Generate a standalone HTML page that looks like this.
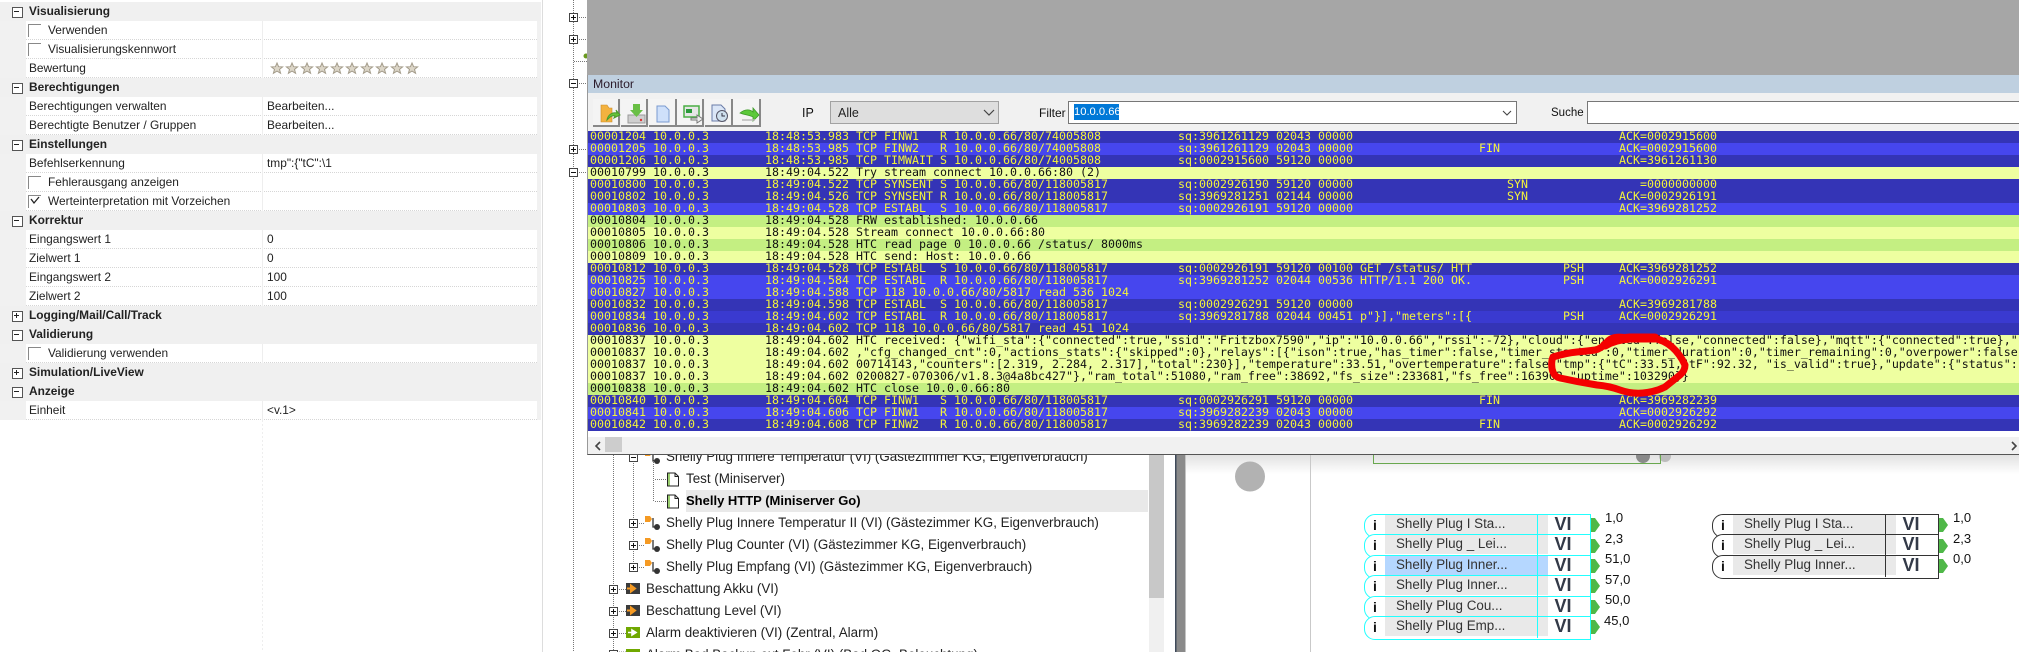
<!DOCTYPE html>
<html lang="de"><head><meta charset="utf-8"><title>Monitor</title>
<style>
html,body{margin:0;padding:0;width:2019px;height:652px;overflow:hidden;background:#fff;font-family:"Liberation Sans",sans-serif;color:#111}
#page{position:relative;width:2019px;height:652px;overflow:hidden;background:#fff}
.abs,.abs *{box-sizing:border-box}
.abs{position:absolute}
#left{position:absolute;left:0;top:2px;width:541px;font-size:11.9px;line-height:19px}
.s,.r{height:19px;position:relative;white-space:nowrap}
.s{background:#f0f0f0;font-weight:bold;color:#222;padding-left:29px}
.r{background:#fff;margin-left:0;padding-left:29px;color:#222}
.r:before{content:"";position:absolute;left:0;top:0;width:26px;height:19px;background:#f1f1f1}
.r:after{content:"";position:absolute;left:537px;top:0;width:4px;height:19px;background:#f1f1f1}
.r u{position:absolute;left:26px;right:4px;bottom:0;border-bottom:1px dotted #d6d6d6;text-decoration:none}
.r em{position:absolute;left:262px;top:0;height:19px;border-left:1px solid #eee;padding-left:4px;font-style:normal}
.c{padding-left:48px}
.c i{position:absolute;left:28px;top:3px;width:12px;height:12px;border-left:1px solid #888;border-top:1px solid #888}
.b{position:absolute;left:12px;top:5px;width:9px;height:9px;border:1px solid #555;background:#fff}
.b:before{content:"";position:absolute;left:1px;top:3px;width:5px;height:1px;background:#222}
.p:after{content:"";position:absolute;left:3px;top:1px;width:1px;height:5px;background:#222}
.t{position:absolute;font-size:13.4px;line-height:20px;height:20px;white-space:nowrap;color:#222}
#mon{position:absolute;left:587px;top:75px;width:1432px;height:379px;background:#f1f1f1;border-bottom:1px solid #555;border-left:1px solid #999;overflow:hidden}
#rows{position:absolute;left:0;top:56px;width:1432px;height:300px;font-family:"DejaVu Sans Mono","Liberation Mono",monospace;font-size:11.63px;line-height:12px}
#rows div{height:12px;position:relative;white-space:pre;overflow:hidden}
#rows span{position:absolute;top:-1px}
.d{background:#3434b6;color:#f4f43a}.l{background:#4646ee;color:#f4f43a}.m{background:#3a3ad0;color:#f4f43a}
.y{background:#eeffa0;color:#111}.g{background:#c4ef82;color:#111}
.a{left:2px}.h{left:177px}.q{left:590px}.fi{left:891px}.sy{left:919px}.ps{left:975px}.k{left:1031px}
.lb{position:absolute;font-size:12.5px;line-height:16px;white-space:nowrap;color:#111}
.bk{position:absolute;height:22px;border:1.5px solid #2ff;background:#fff;border-radius:11px 0 0 11px;width:225px}
.bk.n{border:1.5px solid #333}
.bk b{position:absolute;left:8px;top:2px;font-size:14px;line-height:16px;color:#111}
.bk p{margin:0;position:absolute;left:20px;top:0;width:152px;height:19px;background:#e9e9e9;font-size:13.4px;line-height:18px;padding-left:11px;color:#333;white-space:nowrap}
.bk.sel p{background:#b5d7ff}
.bk s{position:absolute;left:172px;top:-1.5px;height:22px;width:50px;border-left:1.5px solid #2ff;text-decoration:none;text-align:center;font-weight:bold;font-size:18px;line-height:21px;color:#333a48}
.bk.n s{border-left:1.5px solid #333}
.v{position:absolute;font-size:13px;line-height:14px;color:#111}
</style></head><body>
<div id="page">

<div id="left">
<div class="s"><span class="b"></span>Visualisierung</div>
<div class="r c"><i></i>Verwenden<u></u><em></em></div>
<div class="r c"><i></i>Visualisierungskennwort<u></u><em></em></div>
<div class="r">Bewertung<u></u><em></em></div>
<div class="s"><span class="b"></span>Berechtigungen</div>
<div class="r">Berechtigungen verwalten<u></u><em>Bearbeiten...</em></div>
<div class="r">Berechtigte Benutzer / Gruppen<u></u><em>Bearbeiten...</em></div>
<div class="s"><span class="b"></span>Einstellungen</div>
<div class="r">Befehlserkennung<u></u><em>tmp":{"tC":\1</em></div>
<div class="r c"><i></i>Fehlerausgang anzeigen<u></u><em></em></div>
<div class="r c"><i></i>Werteinterpretation mit Vorzeichen<u></u><em></em></div>
<div class="s"><span class="b"></span>Korrektur</div>
<div class="r">Eingangswert 1<u></u><em>0</em></div>
<div class="r">Zielwert 1<u></u><em>0</em></div>
<div class="r">Eingangswert 2<u></u><em>100</em></div>
<div class="r">Zielwert 2<u></u><em>100</em></div>
<div class="s"><span class="b p"></span>Logging/Mail/Call/Track</div>
<div class="s"><span class="b"></span>Validierung</div>
<div class="r c"><i></i>Validierung verwenden<u></u><em></em></div>
<div class="s"><span class="b p"></span>Simulation/LiveView</div>
<div class="s"><span class="b"></span>Anzeige</div>
<div class="r">Einheit<u></u><em>&lt;v.1&gt;</em></div>
</div>

<svg class="abs" style="left:0;top:0" width="2019" height="652" viewBox="0 0 2019 652">
<defs>
<linearGradient id="sh" x1="0" y1="0" x2="0" y2="1"><stop offset="0" stop-color="#e0e0e0"/><stop offset="1" stop-color="#fff"/></linearGradient>
<polygon id="st" points="0,-5.5 1.6,-1.8 5.6,-1.6 2.5,0.9 3.6,4.8 0,2.6 -3.6,4.8 -2.5,0.9 -5.6,-1.6 -1.6,-1.8" fill="#dcd6c8" stroke="#a39b8a" stroke-width="1"/>
<g id="pi"><polygon points="0,-7 5,-7 7,-4 5,-1 0,-1" fill="#f59a23"/><path d="M8-5V4H11" fill="none" stroke="#333" stroke-width="1.3"/><circle cx="12" cy="4" r="3" fill="#333"/></g>
<g id="doc"><path d="M.5-6.5H8L11.5-3V6.5H.5Z" fill="#fff" stroke="#222"/><path d="M8-6.5V-3H11.5" fill="none" stroke="#222"/><rect x="1" y="-6" width="2" height="12" fill="#9ccf70"/></g>
</defs>
<!-- left panel extras -->
<path d="M262.5 420V652" stroke="#eee" stroke-dasharray="2 2"/>
<path d="M542.5 0V652" stroke="#ddd"/>
<path d="M31 199L34 203 39 197" fill="none" stroke="#222" stroke-width="1.3"/>
<use href="#st" x="277" y="68.5"/><use href="#st" x="292" y="68.5"/><use href="#st" x="307" y="68.5"/><use href="#st" x="322" y="68.5"/><use href="#st" x="337" y="68.5"/><use href="#st" x="352" y="68.5"/><use href="#st" x="367" y="68.5"/><use href="#st" x="382" y="68.5"/><use href="#st" x="397" y="68.5"/><use href="#st" x="412" y="68.5"/>

<!-- tree upper -->
<path d="M573.5 0V652M577 17.5H587M577 39.5H587M574 61.5H587M577 83.5H587M577 149.5H587M577 172.5H587" stroke="#777" stroke-dasharray="1 1" fill="none"/>
<circle cx="586" cy="56" r="2.5" fill="#6a9a1f"/>
<g fill="#fff" stroke="#444"><rect x="569.5" y="13.5" width="8" height="8"/><rect x="569.5" y="35.5" width="8" height="8"/><rect x="569.5" y="79.5" width="8" height="8"/><rect x="569.5" y="145.5" width="8" height="8"/><rect x="569.5" y="168.5" width="8" height="8"/></g>
<path d="M571 17.5H576M573.5 15V20M571 39.5H576M573.5 37V42M571 83.5H576M571 149.5H576M573.5 147V152M571 172.5H576" stroke="#111"/>

<!-- tree lower lines -->
<path d="M613.5 453V652M633.5 453V570M653.5 460V501M655 479.5H667M655 501.5H667M637 523.5H645M637 545.5H645M637 567.5H645M617 589.5H626M617 611.5H626M617 633.5H626M617 652H626" stroke="#777" stroke-dasharray="1 1" fill="none"/>
<g fill="#fff" stroke="#444"><rect x="629.5" y="453.5" width="8" height="8"/><rect x="629.5" y="519.5" width="8" height="8"/><rect x="629.5" y="541.5" width="8" height="8"/><rect x="629.5" y="563.5" width="8" height="8"/><rect x="609.5" y="585.5" width="8" height="8"/><rect x="609.5" y="607.5" width="8" height="8"/><rect x="609.5" y="629.5" width="8" height="8"/><rect x="609.5" y="650.5" width="8" height="8"/></g>
<path d="M631 457.5H636M631 523.5H636M633.5 521V526M631 545.5H636M633.5 543V548M631 567.5H636M633.5 565V570M611 589.5H616M613.5 587V592M611 611.5H616M613.5 609V614M611 633.5H616M613.5 631V636" stroke="#111"/>
<use href="#pi" x="645" y="457"/><use href="#pi" x="645" y="523"/><use href="#pi" x="645" y="545"/><use href="#pi" x="645" y="567"/>
<use href="#doc" x="667" y="479.5"/><use href="#doc" x="667" y="501.5"/>
<rect x="686" y="490" width="462" height="22" fill="#e9e9e9"/>
<rect x="626" y="583" width="14" height="11" fill="#3b3b3b"/><path d="M627 588.5H633M631 585.5L635 588.5 631 591.5Z" stroke="#f59a23" stroke-width="2" fill="#f59a23"/>
<rect x="626" y="605" width="14" height="11" fill="#3b3b3b"/><path d="M627 610.5H633M631 607.5L635 610.5 631 613.5Z" stroke="#f59a23" stroke-width="2" fill="#f59a23"/>
<rect x="626" y="627" width="14" height="11" fill="#70a800"/><path d="M628 632.5H634M632 630L636 632.5 632 635Z" stroke="#fff" stroke-width="1.6" fill="#fff"/>
<rect x="626" y="649" width="14" height="3" fill="#70a800"/>

<!-- tree scrollbar + divider -->
<rect x="1149" y="453" width="15" height="199" fill="#f0f0f0"/>
<rect x="1149" y="453" width="15" height="145" fill="#c8c8c8"/>
<rect x="1175" y="453" width="1.5" height="199" fill="#3f4a5a"/>
<rect x="1176.5" y="453" width="9" height="199" fill="#8a8a8a"/>
<rect x="1186" y="454" width="833" height="20" fill="url(#sh)"/>
<circle cx="1250" cy="476.5" r="15" fill="#b2b2b2"/>
<path d="M1310.5 453V652" stroke="#c9c9c9"/>
<circle cx="1643" cy="456" r="7" fill="#8a8a8a"/><circle cx="1665" cy="456" r="6" fill="#bcbcbc"/>
<path d="M1373.5 450V463.5H1660.5V450" fill="none" stroke="#69a84f"/>

<!-- outputs -->
<g fill="#4fb848">
<polygon points="1589,518 1595,518 1600,525 1595,532 1589,532"/>
<polygon points="1589,539 1595,539 1600,546 1595,553 1589,553"/>
<polygon points="1589,559 1595,559 1600,566 1595,573 1589,573"/>
<polygon points="1589,579 1595,579 1600,586 1595,593 1589,593"/>
<polygon points="1589,600 1595,600 1600,607 1595,614 1589,614"/>
<polygon points="1589,620 1595,620 1600,627 1595,634 1589,634"/>
<polygon points="1937,518 1943,518 1948,525 1943,532 1937,532"/>
<polygon points="1937,539 1943,539 1948,546 1943,553 1937,553"/>
<polygon points="1937,559 1943,559 1948,566 1943,573 1937,573"/>
</g>
</svg>

<div class="t" style="left:666px;top:447px">Shelly Plug Innere Temperatur (VI) (Gästezimmer KG, Eigenverbrauch)</div>
<div class="t" style="left:686px;top:469px">Test (Miniserver)</div>
<div class="t" style="left:686px;top:491px;font-weight:bold;color:#000;font-size:13px">Shelly HTTP (Miniserver Go)</div>
<div class="t" style="left:666px;top:513px">Shelly Plug Innere Temperatur II (VI) (Gästezimmer KG, Eigenverbrauch)</div>
<div class="t" style="left:666px;top:535px">Shelly Plug Counter (VI) (Gästezimmer KG, Eigenverbrauch)</div>
<div class="t" style="left:666px;top:557px">Shelly Plug Empfang (VI) (Gästezimmer KG, Eigenverbrauch)</div>
<div class="t" style="left:646px;top:579px">Beschattung Akku (VI)</div>
<div class="t" style="left:646px;top:601px">Beschattung Level (VI)</div>
<div class="t" style="left:646px;top:623px">Alarm deaktivieren (VI) (Zentral, Alarm)</div>
<div class="t" style="left:646px;top:645px">Alarm Bad Backup ext Fehr (VI) (Bad OG, Beleuchtung)</div>

<div class="bk" style="left:1364px;top:514px"><b>i</b><p>Shelly Plug I Sta...</p><s>VI</s></div>
<div class="bk" style="left:1364px;top:534px"><b>i</b><p>Shelly Plug _ Lei...</p><s>VI</s></div>
<div class="bk sel" style="left:1364px;top:555px"><b>i</b><p>Shelly Plug Inner...</p><s>VI</s></div>
<div class="bk" style="left:1364px;top:575px"><b>i</b><p>Shelly Plug Inner...</p><s>VI</s></div>
<div class="bk" style="left:1364px;top:596px"><b>i</b><p>Shelly Plug Cou...</p><s>VI</s></div>
<div class="bk" style="left:1364px;top:616px"><b>i</b><p>Shelly Plug Emp...</p><s>VI</s></div>
<div class="bk n" style="left:1712px;top:514px"><b>i</b><p>Shelly Plug I Sta...</p><s>VI</s></div>
<div class="bk n" style="left:1712px;top:534px"><b>i</b><p>Shelly Plug _ Lei...</p><s>VI</s></div>
<div class="bk n" style="left:1712px;top:555px"><b>i</b><p>Shelly Plug Inner...</p><s>VI</s></div>
<div class="v" style="left:1605px;top:511px">1,0</div>
<div class="v" style="left:1605px;top:532px">2,3</div>
<div class="v" style="left:1605px;top:552px">51,0</div>
<div class="v" style="left:1605px;top:573px">57,0</div>
<div class="v" style="left:1605px;top:593px">50,0</div>
<div class="v" style="left:1604px;top:614px">45,0</div>
<div class="v" style="left:1953px;top:511px">1,0</div>
<div class="v" style="left:1953px;top:532px">2,3</div>
<div class="v" style="left:1953px;top:552px">0,0</div>

<!-- gray top -->
<div class="abs" style="left:587px;top:0;width:1432px;height:75px;background:#a6a6a6"></div>

<!-- monitor -->
<div id="mon">
<div class="abs" style="left:0;top:0;width:1432px;height:18px;background:#bfd0e0"></div>
<div class="lb" style="left:5px;top:1px;font-size:12.3px;color:#2b1a2a">Monitor</div>

<div class="abs" style="left:5px;top:24px;width:27px;height:28px;background:#f4f4f4;border-right:2px solid #888;border-bottom:2px solid #888"></div>
<div class="abs" style="left:33px;top:24px;width:27px;height:28px;background:#f4f4f4;border-right:2px solid #888;border-bottom:2px solid #888"></div>
<div class="abs" style="left:61px;top:24px;width:28px;height:28px;background:#f4f4f4;border-right:2px solid #888;border-bottom:2px solid #888"></div>
<div class="abs" style="left:89px;top:24px;width:27px;height:28px;background:#f4f4f4;border-right:2px solid #888;border-bottom:2px solid #888"></div>
<div class="abs" style="left:117px;top:24px;width:28px;height:28px;background:#f4f4f4;border-right:2px solid #888;border-bottom:2px solid #888"></div>
<div class="abs" style="left:145px;top:24px;width:28px;height:28px;background:#f4f4f4;border-right:2px solid #888;border-bottom:2px solid #888"></div>
<svg class="abs" style="left:0;top:0" width="200" height="56" viewBox="587 75 200 56">
<path d="M600 105H606L608 108H611V122H600Z" fill="#f3b23f" stroke="#c98a2a" stroke-width=".6"/>
<path d="M606 120C607 114 612 112 616 113L615 110 619 115 613 118 614 116C611 115 609 117 606 120Z" fill="#66c23a" stroke="#4a9a2a" stroke-width="1"/>
<path d="M627 115H644V123H627Z" fill="#cfcfcf" stroke="#9a9a9a"/><circle cx="640" cy="120" r="1.2" fill="#d33"/>
<path d="M632 104H639V110H642L635.5 117 629 110H632Z" fill="#69bf45"/>
<path d="M656 106H664L668 110V122H656Z" fill="#cfe0fa" stroke="#7a9ad0"/>
<rect x="683" y="106" width="15" height="11" fill="#e6e6e6" stroke="#4aae45" stroke-width="1.5"/><rect x="685" y="109" width="6" height="4" fill="#2a9a3a"/>
<path d="M690 118H696V115L702 119 696 123V120H690Z" fill="#eee" stroke="#777"/>
<path d="M711 105H720L724 109V121H711Z" fill="#dbe6f7" stroke="#6a7ca8"/><circle cx="721" cy="116" r="5.5" fill="#cfe0ee" stroke="#556"/><path d="M721 113V116H724" stroke="#334" fill="none"/>
<path d="M739 113C744 109 749 109 752 112V108L758 115 752 121V117C748 115 744 115 739 113Z" fill="#5cc93a" stroke="#3d9a28" stroke-width=".8"/>
<path d="M741 120H754" stroke="#bbb" stroke-width="1.5"/>
</svg>

<div class="lb" style="left:214px;top:30px">IP</div>
<div class="abs" style="left:242px;top:26px;width:169px;height:23px;background:#dedede;border:1px solid #a2a2a2"></div>
<div class="lb" style="left:250px;top:30px;color:#222">Alle</div>
<svg class="abs" style="left:395px;top:33px" width="12" height="9"><path d="M1 2L6 7 11 2" fill="none" stroke="#444" stroke-width="1.2"/></svg>
<div class="lb" style="left:451px;top:30px;font-size:12px">Filter</div>
<div class="abs" style="left:480px;top:26px;width:449px;height:23px;background:#fff;border:1px solid #777"></div>
<div class="abs" style="left:486px;top:29px;width:45px;height:16px;background:#0078d7;color:#fff;font-size:11.2px;line-height:16px;text-align:center">10.0.0.66</div>
<svg class="abs" style="left:913px;top:34px" width="12" height="9"><path d="M2 2L6 6 10 2" fill="none" stroke="#444" stroke-width="1.1"/></svg>
<div class="lb" style="left:963px;top:30px;font-size:11.5px">Suche</div>
<div class="abs" style="left:999px;top:26px;width:440px;height:23px;background:#fff;border:1px solid #777"></div>

<div id="rows">
<div class="d"><span class="a">00001204 10.0.0.3</span><span class="h">18:48:53.983 TCP FINW1   R 10.0.0.66/80/74005808</span><span class="q">sq:3961261129 02043 00000</span><span class="k">ACK=0002915600</span></div>
<div class="l"><span class="a">00001205 10.0.0.3</span><span class="h">18:48:53.985 TCP FINW2   R 10.0.0.66/80/74005808</span><span class="q">sq:3961261129 02043 00000</span><span class="fi">FIN</span><span class="k">ACK=0002915600</span></div>
<div class="d"><span class="a">00001206 10.0.0.3</span><span class="h">18:48:53.985 TCP TIMWAIT S 10.0.0.66/80/74005808</span><span class="q">sq:0002915600 59120 00000</span><span class="k">ACK=3961261130</span></div>
<div class="y"><span class="a">00010799 10.0.0.3</span><span class="h">18:49:04.522 Try stream connect 10.0.0.66:80 (2)</span></div>
<div class="d"><span class="a">00010800 10.0.0.3</span><span class="h">18:49:04.522 TCP SYNSENT S 10.0.0.66/80/118005817</span><span class="q">sq:0002926190 59120 00000</span><span class="sy">SYN</span><span class="k">   =0000000000</span></div>
<div class="d"><span class="a">00010802 10.0.0.3</span><span class="h">18:49:04.526 TCP SYNSENT R 10.0.0.66/80/118005817</span><span class="q">sq:3969281251 02144 00000</span><span class="sy">SYN</span><span class="k">ACK=0002926191</span></div>
<div class="l"><span class="a">00010803 10.0.0.3</span><span class="h">18:49:04.528 TCP ESTABL  S 10.0.0.66/80/118005817</span><span class="q">sq:0002926191 59120 00000</span><span class="k">ACK=3969281252</span></div>
<div class="g"><span class="a">00010804 10.0.0.3</span><span class="h">18:49:04.528 FRW established: 10.0.0.66</span></div>
<div class="y"><span class="a">00010805 10.0.0.3</span><span class="h">18:49:04.528 Stream connect 10.0.0.66:80</span></div>
<div class="g"><span class="a">00010806 10.0.0.3</span><span class="h">18:49:04.528 HTC read page 0 10.0.0.66 /status/ 8000ms</span></div>
<div class="y"><span class="a">00010809 10.0.0.3</span><span class="h">18:49:04.528 HTC send: Host: 10.0.0.66</span></div>
<div class="d"><span class="a">00010812 10.0.0.3</span><span class="h">18:49:04.528 TCP ESTABL  S 10.0.0.66/80/118005817</span><span class="q">sq:0002926191 59120 00100 GET /status/ HTT</span><span class="ps">PSH</span><span class="k">ACK=3969281252</span></div>
<div class="l"><span class="a">00010825 10.0.0.3</span><span class="h">18:49:04.584 TCP ESTABL  R 10.0.0.66/80/118005817</span><span class="q">sq:3969281252 02044 00536 HTTP/1.1 200 OK.</span><span class="ps">PSH</span><span class="k">ACK=0002926291</span></div>
<div class="l"><span class="a">00010827 10.0.0.3</span><span class="h">18:49:04.588 TCP 118 10.0.0.66/80/5817 read 536 1024</span></div>
<div class="d"><span class="a">00010832 10.0.0.3</span><span class="h">18:49:04.598 TCP ESTABL  S 10.0.0.66/80/118005817</span><span class="q">sq:0002926291 59120 00000</span><span class="k">ACK=3969281788</span></div>
<div class="m"><span class="a">00010834 10.0.0.3</span><span class="h">18:49:04.602 TCP ESTABL  R 10.0.0.66/80/118005817</span><span class="q">sq:3969281788 02044 00451 p"}],"meters":[{</span><span class="ps">PSH</span><span class="k">ACK=0002926291</span></div>
<div class="d"><span class="a">00010836 10.0.0.3</span><span class="h">18:49:04.602 TCP 118 10.0.0.66/80/5817 read 451 1024</span></div>
<div class="y"><span class="a">00010837 10.0.0.3</span><span class="h">18:49:04.602 HTC received: {"wifi_sta":{"connected":true,"ssid":"Fritzbox7590","ip":"10.0.0.66","rssi":-72},"cloud":{"enabled":false,"connected":false},"mqtt":{"connected":true},"</span></div>
<div class="y"><span class="a">00010837 10.0.0.3</span><span class="h">18:49:04.602 ,"cfg_changed_cnt":0,"actions_stats":{"skipped":0},"relays":[{"ison":true,"has_timer":false,"timer_started":0,"timer_duration":0,"timer_remaining":0,"overpower":false</span></div>
<div class="y"><span class="a">00010837 10.0.0.3</span><span class="h">18:49:04.602 00714143,"counters":[2.319, 2.284, 2.317],"total":230}],"temperature":33.51,"overtemperature":false,"tmp":{"tC":33.51,"tF":92.32, "is_valid":true},"update":{"status":"</span></div>
<div class="y"><span class="a">00010837 10.0.0.3</span><span class="h">18:49:04.602 0200827-070306/v1.8.3@4a8bc427"},"ram_total":51080,"ram_free":38692,"fs_size":233681,"fs_free":163902,"uptime":103290}}</span></div>
<div class="g"><span class="a">00010838 10.0.0.3</span><span class="h">18:49:04.602 HTC close 10.0.0.66:80</span></div>
<div class="d"><span class="a">00010840 10.0.0.3</span><span class="h">18:49:04.604 TCP FINW1   S 10.0.0.66/80/118005817</span><span class="q">sq:0002926291 59120 00000</span><span class="fi">FIN</span><span class="k">ACK=3969282239</span></div>
<div class="l"><span class="a">00010841 10.0.0.3</span><span class="h">18:49:04.606 TCP FINW1   R 10.0.0.66/80/118005817</span><span class="q">sq:3969282239 02043 00000</span><span class="k">ACK=0002926292</span></div>
<div class="d"><span class="a">00010842 10.0.0.3</span><span class="h">18:49:04.608 TCP FINW2   R 10.0.0.66/80/118005817</span><span class="q">sq:3969282239 02043 00000</span><span class="fi">FIN</span><span class="k">ACK=0002926292</span></div>
</div>

<div class="abs" style="left:0;top:356px;width:1432px;height:6px;background:#fff"></div>
<svg class="abs" style="left:4px;top:364px" width="12" height="14"><path d="M8 3L4 7 8 11" fill="none" stroke="#444" stroke-width="1.6"/></svg>
<div class="abs" style="left:17px;top:362px;width:17px;height:15px;background:#cdcdcd"></div>
<svg class="abs" style="left:1420px;top:364px" width="12" height="14"><path d="M4 3L8 7 4 11" fill="none" stroke="#444" stroke-width="1.6"/></svg>
</div>

<svg class="abs" style="left:0;top:0;pointer-events:none" width="2019" height="652" viewBox="0 0 2019 652">
<path d="M1553 357Q1566 353 1577 352T1595 350Q1601 349 1607 342T1627 338H1653Q1664 340 1672 347T1685 365Q1685 371 1680 375T1665 387Q1655 392 1643 393T1620 390T1597 385Q1578 382 1560 378Q1555 377 1553 372T1552 360Z" fill="none" stroke="#f40000" stroke-width="7" stroke-linejoin="round"/>
<path d="M1605 345Q1615 339 1630 338H1655" fill="none" stroke="#f40000" stroke-width="9" stroke-linecap="round"/>
</svg>
</div>
</body></html>
